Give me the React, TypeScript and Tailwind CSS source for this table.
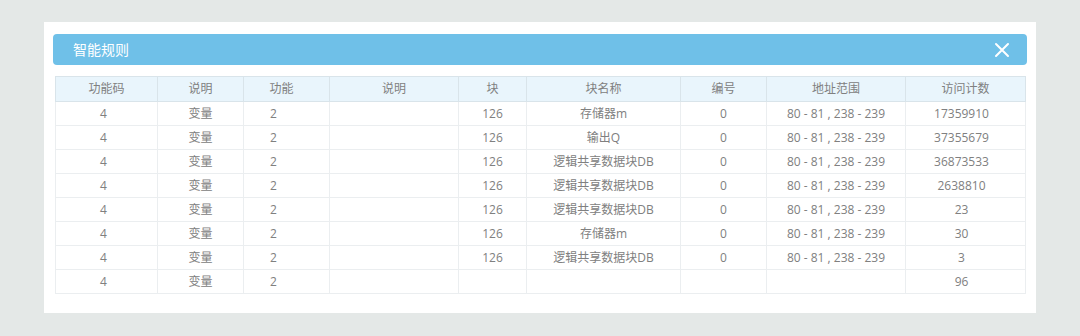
const cols = [
  { label: "功能码", w: "w-[102px]" },
  { label: "说明", w: "w-[86px]" },
  { label: "功能", w: "w-[86px]" },
  { label: "说明", w: "w-[129px]" },
  { label: "块", w: "w-[68px]" },
  { label: "块名称", w: "w-[154px]" },
  { label: "编号", w: "w-[86px]" },
  { label: "地址范围", w: "w-[139px]" },
  { label: "访问计数", w: "w-[120px]" },
];

const addr = "80 - 81 , 238 - 239";

const rows = [
  ["4", "变量", "2", "", "126", "存储器m", "0", addr, "17359910"],
  ["4", "变量", "2", "", "126", "输出Q", "0", addr, "37355679"],
  ["4", "变量", "2", "", "126", "逻辑共享数据块DB", "0", addr, "36873533"],
  ["4", "变量", "2", "", "126", "逻辑共享数据块DB", "0", addr, "2638810"],
  ["4", "变量", "2", "", "126", "逻辑共享数据块DB", "0", addr, "23"],
  ["4", "变量", "2", "", "126", "存储器m", "0", addr, "30"],
  ["4", "变量", "2", "", "126", "逻辑共享数据块DB", "0", addr, "3"],
  ["4", "变量", "2", "", "", "", "", "", "96"],
];

export default function App() {
  return (
    <div
      className="w-[1080px] h-[336px] bg-[#e4e8e7] pt-[22px] pl-[44px]"
      style={{ fontFamily: '"Open Sans", "Noto Sans CJK SC", sans-serif' }}
    >
      <div className="w-[992px] h-[291px] bg-white pt-[12px] pl-[9px]">
        {/* Title bar */}
        <div className="w-[974px] h-[31px] rounded-[4px] bg-[#6fc0e8] flex items-center justify-between pl-[20px] pr-[17px]">
          <span className="text-[14px] text-white">智能规则</span>
          <svg width="16" height="16" viewBox="0 0 16 16" aria-hidden="true">
            <path d="M2 2 L14 14 M14 2 L2 14" stroke="#fff" strokeWidth="2" strokeLinecap="round" />
          </svg>
        </div>

        {/* Table */}
        <table className="mt-[11px] ml-[2px] border-collapse text-[12px] text-[#808080] table-fixed">
          <thead>
            <tr className="h-[25px] bg-[#e9f5fc]">
              {cols.map((c, i) => (
                <th
                  key={i}
                  className={`${c.w} font-normal text-center border border-[#d9e4ea] p-0 ${i === 2 ? "pr-[10px]" : ""}`}
                >
                  {c.label}
                </th>
              ))}
            </tr>
          </thead>
          <tbody>
            {rows.map((r, i) => (
              <tr key={i} className="h-[24px]">
                {r.map((v, j) => (
                  <td
                    key={j}
                    className={`text-center border border-[#ebeef0] p-0 ${j === 2 ? "pr-[26px]" : ""} ${j === 0 ? "pr-[6px]" : ""} ${j === 8 ? "pr-[8px]" : ""}`}
                  >
                    {v}
                  </td>
                ))}
              </tr>
            ))}
          </tbody>
        </table>
      </div>
    </div>
  );
}
